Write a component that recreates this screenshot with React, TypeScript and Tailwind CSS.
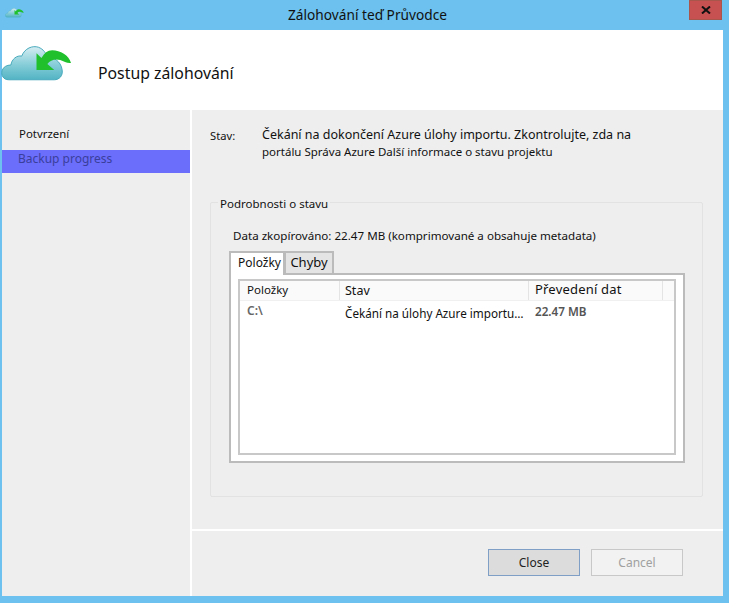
function CloudIcon({ className }: { className: string }) {
  return (
    <svg viewBox="0 0 72 38" className={className}>
      <defs>
        <linearGradient id="cloudFill" x1="0" y1="0" x2="0" y2="1">
          <stop offset="0" stopColor="#d5edf2" />
          <stop offset="0.55" stopColor="#85cdd8" />
          <stop offset="1" stopColor="#52b3c3" />
        </linearGradient>
      </defs>
      <path
        d="M8 35C2 35 0 30 1 26C2 22 6 20 10 20C11 14 16 10 21 11C24 3 32 0 38 2C43 4 46 8 46 12C52 11 61 16 62 25C63 31 59 35 54 35Z"
        fill="url(#cloudFill)"
        stroke="#45a9bb"
        strokeWidth="1"
      />
      <path
        d="M36 8L36 25L54 25L47 19C50 15 55 13.500 60 15C64 16.500 67 18.500 71 18C69 10 60 5 52 5C47 5 44 8 41 13Z"
        fill="#1fc02c"
      />
    </svg>
  );
}

export default function App() {
  return (
    <div className="w-[729px] h-[603px] bg-[#6cc1ee] flex flex-col text-[#111] text-[12px] overflow-hidden" style={{ fontFamily: '"Noto Sans", sans-serif' }}>
      <div className="h-[30px] shrink-0 flex items-start relative">
        <CloudIcon className="w-[19px] h-[10px] ml-[5px] mt-[8px]" />
        <div className="absolute left-0 right-0 top-[6px] text-center text-[13.7px] leading-[18px] pl-[6px]">Zálohování teď Průvodce</div>
        <div className="ml-auto mr-[7px] w-[33px] h-[20px] bg-[#c75050] border border-[#a8554c] flex items-center justify-center">
          <svg viewBox="0 0 10 8" className="w-[10px] h-[8px]"><path d="M1 0.500L9 7.500M9 0.500L1 7.500" stroke="#111" strokeWidth="2" /></svg>
        </div>
      </div>

      <div className="ml-[2px] mr-[6px] h-[566px] flex flex-col bg-[#eeeeee]">
        <div className="h-[80px] shrink-0 bg-white flex relative">
          <CloudIcon className="w-[71px] h-[38px] ml-[-1px] mt-[15px]" />
          <div className="ml-[26px] mt-[32px] text-[15.8px] leading-[22px]">Postup zálohování</div>
        </div>
        <div className="flex-1 flex min-h-0">
          <div className="w-[188px] shrink-0 pt-[15px]">
            <div className="pl-[17px] h-[25px] leading-[18px] text-[11.4px]">Potvrzení</div>
            <div className="h-[23px] bg-[#6b6dfb] text-[#3a3f9c] pl-[16px] leading-[18px]">Backup progress</div>
          </div>
          <div className="w-[2px] bg-white shrink-0" />
          <div className="flex-1 flex flex-col min-w-0">
            <div className="h-[419px] shrink-0 pl-[18px] pr-[20px] pt-[14px] flex flex-col">
              <div className="flex h-[78px] pt-[2px]">
                <div className="w-[52px] shrink-0 text-[11.2px] leading-[17px] pt-[1px]">Stav:</div>
                <div className="w-[400px] leading-[17px]">
                  <div className="text-[12.5px]">Čekání na dokončení Azure úlohy importu. Zkontrolujte, zda na</div>
                  <div className="text-[11.5px]">portálu Správa Azure Další informace o stavu projektu</div>
                </div>
              </div>
              <div className="border border-[#e2e2e2] rounded-[2px] h-[295px] px-[18px] flex flex-col">
                <div className="mt-[-7px] ml-[-11px] w-fit px-[2px] bg-[#eeeeee] leading-[16px] text-[11.5px]">Podrobnosti o stavu</div>
                <div className="mt-[15px] ml-[4px] leading-[18px] text-[11.6px]">Data zkopírováno: 22.47 MB (komprimované a obsahuje metadata)</div>
                <div className="flex items-end h-[24px] mt-[4px] relative z-10">
                  <div className="h-[24px] w-[56px] bg-white border-2 border-b-0 border-[#bbbbbb] text-center leading-[20px] mb-[-2px] pl-[5px]">Položky</div>
                  <div className="h-[22px] w-[50px] ml-[-1px] bg-[#e4e4e4] border-2 border-b-0 border-[#bbbbbb] text-center text-[13px] leading-[18px]">Chyby</div>
                </div>
                <div className="h-[190px] w-[456px] bg-white border-2 border-[#bbbbbb] pt-[4px] pb-[6px] px-[7px]">
                  <div className="h-full border-2 border-[#c8c8c8] flex flex-col">
                    <div className="h-[20px] shrink-0 flex bg-[#fafafa] border-b border-[#f0f0f0] leading-[18px] text-[11.5px]">
                      <div className="w-[100px] pl-[7px] border-r border-[#e4e4e4]">Položky</div>
                      <div className="w-[189px] pl-[5px] pt-[1px] border-r border-[#e4e4e4] text-[12.5px]">Stav</div>
                      <div className="w-[134px] pl-[6px] border-r border-[#e4e4e4] text-[13px] leading-[16px] tracking-[0.2px]">Převedení dat</div>
                    </div>
                    <div className="flex leading-[18px] pt-[1px]">
                      <div className="w-[100px] pl-[7px] text-[#666] font-semibold">C:\</div>
                      <div className="w-[189px] pl-[5px] pt-[2px] truncate text-[11.7px]">Čekání na úlohy Azure importu…</div>
                      <div className="pl-[6px] text-[#555] font-semibold text-[11.7px]">22.47 MB</div>
                    </div>
                  </div>
                </div>
              </div>
            </div>
            <div className="h-[2px] bg-white shrink-0" />
            <div className="flex justify-end gap-[11px] pr-[40px] pt-[18px]">
              <div className="w-[92px] h-[27px] bg-[#dcdcdc] border border-[#7f9fc6] flex items-center justify-center text-[#222] pt-[1px]">Close</div>
              <div className="w-[92px] h-[27px] bg-[#f2f2f2] border border-[#c8c8c8] flex items-center justify-center text-[#a0a0a0] pt-[1px]">Cancel</div>
            </div>
          </div>
        </div>
      </div>
    </div>
  );
}
